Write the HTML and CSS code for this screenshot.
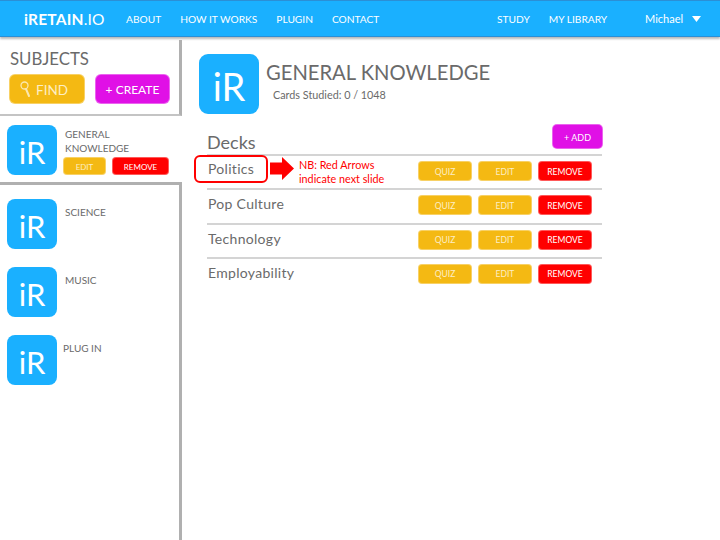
FILE: index.html
```html
<!DOCTYPE html>
<html lang="en">
<head>
<meta charset="utf-8">
<title>iRetain.io</title>
<link rel="stylesheet" href="styles.css">
</head>
<body>
<header class="topbar">
  <div class="logo"><b>iRETAIN</b>.IO</div>
  <nav class="nav nav-main"><a>ABOUT</a><a>HOW IT WORKS</a><a>PLUGIN</a><a>CONTACT</a></nav>
  <nav class="nav nav-user"><a>STUDY</a><a>MY LIBRARY</a></nav>
  <div class="user">Michael<svg class="caret" width="9" height="6" viewBox="0 0 9 6"><path d="M0 0h9L4.500 6z" fill="#fff"/></svg></div>
</header>
<div class="layout">
  <aside class="sidebar">
    <section class="subjects-head">
      <h2>SUBJECTS</h2>
      <div class="head-btns">
        <button class="btn amber find"><svg class="lens" width="11" height="17" viewBox="0 0 11 17"><circle cx="4.500" cy="4.500" r="3.500" fill="none" stroke="#fbe7ae" stroke-width="1.300"/><path d="M6 8l3 7" stroke="#fbe7ae" stroke-width="2" stroke-linecap="round"/></svg>FIND</button>
        <button class="btn magenta create">+ CREATE</button>
      </div>
    </section>
    <section class="active-subject">
      <div class="tile">iR</div>
      <div class="active-body">
        <div class="subject-name">GENERAL<br>KNOWLEDGE</div>
        <div class="mini-btns"><button class="btn amber mini-edit">EDIT</button><button class="btn red mini-remove">REMOVE</button></div>
      </div>
    </section>
    <section class="subject-list">
      <div class="subject"><div class="tile">iR</div><div class="subject-name">SCIENCE</div></div>
      <div class="subject"><div class="tile">iR</div><div class="subject-name">MUSIC</div></div>
      <div class="subject plug"><div class="tile">iR</div><div class="subject-name">PLUG IN</div></div>
    </section>
  </aside>
  <main class="content">
    <div class="title-row">
      <div class="tile tile-lg">iR</div>
      <div class="title-text">
        <h1>GENERAL KNOWLEDGE</h1>
        <p>Cards Studied: 0 / 1048</p>
      </div>
    </div>
    <div class="decks-head">
      <h2>Decks</h2>
      <button class="btn magenta add">+ ADD</button>
    </div>
    <div class="deck first">
      <span class="deck-name">Politics</span>
      <span class="outline"></span>
      <svg class="arrow" width="24" height="23" viewBox="0 0 24 23"><path d="M0 5.500h12V0l12 11.500L12 23v-5.500H0z" fill="#f00"/></svg>
      <span class="note">NB: Red Arrows<br>indicate next slide</span>
      <div class="actions"><button class="btn amber">QUIZ</button><button class="btn amber">EDIT</button><button class="btn red">REMOVE</button></div>
    </div>
    <div class="deck">
      <span class="deck-name">Pop Culture</span>
      <div class="actions"><button class="btn amber">QUIZ</button><button class="btn amber">EDIT</button><button class="btn red">REMOVE</button></div>
    </div>
    <div class="deck">
      <span class="deck-name">Technology</span>
      <div class="actions"><button class="btn amber">QUIZ</button><button class="btn amber">EDIT</button><button class="btn red">REMOVE</button></div>
    </div>
    <div class="deck">
      <span class="deck-name">Employability</span>
      <div class="actions"><button class="btn amber">QUIZ</button><button class="btn amber">EDIT</button><button class="btn red">REMOVE</button></div>
    </div>
  </main>
</div>
</body>
</html>
```
FILE: styles.css
```css
* { box-sizing: border-box; }
html, body { margin: 0; height: 100%; }
body {
  width: 720px;
  height: 540px;
  overflow: hidden;
  background: #fff;
  color: #6a6a6a;
  font-family: Lato, "Open Sans", sans-serif;
}
h1, h2, p { margin: 0; font-weight: 400; }

.topbar {
  height: 37px;
  background: #1ab0ff;
  border-top: 1px solid #2b8fd6;
  border-bottom: 1px solid #2b8fd6;
  box-shadow: 0 2px 2px #bbb;
  color: #fff;
  display: flex;
  align-items: center;
  padding-left: 24px;
  position: relative;
}
.logo { width: 102px; font-size: 15.500px; letter-spacing: 0.2px; }
.logo b { font-weight: 700; }
.nav { display: flex; font-size: 10.200px; }
.nav-main { gap: 19px; width: 371px; }
.nav-user { gap: 19px; width: 148px; }
.user { font-size: 11px; display: flex; align-items: center; gap: 9px; }

.layout { display: flex; height: 503px; }
.sidebar {
  width: 182px;
  flex: none;
  display: flex;
  flex-direction: column;
}
.subjects-head {
  height: 76px;
  margin-top: 3px;
  padding: 8px 0 0 10px;
  border-right: 3px solid #b0b0b0;
  border-bottom: 2px solid #c4c4c4;
}
.subjects-head h2 { font-size: 16.800px; line-height: 21px; }
.head-btns { display: flex; gap: 10px; margin-top: 5px; margin-left: -1px; }
.btn {
  border: 1px solid rgba(255,255,255,0.35);
  border-radius: 4px;
  color: #fff;
  font-family: inherit;
  font-size: 8.500px;
  padding: 1px 0 0;
  height: 20px;
  width: 54px;
  display: flex;
  align-items: center;
  justify-content: center;
}
.amber { background: #f4b913; color: #fdeec4; }
.red { background: #ff0000; }
.magenta { background: #e010e6; }
.find, .create { height: 30px; border-radius: 6px; }
.create { width: 75px; font-size: 12px; }
.find { width: 76px; font-size: 13.500px; gap: 5px; justify-content: flex-start; padding-left: 10px; }

.tile {
  width: 50px;
  height: 50px;
  flex: none;
  background: #1ab0ff;
  border-radius: 8px;
  color: #fff;
  font-size: 31px;
  display: flex;
  align-items: center;
  justify-content: center;
  padding-top: 4px;
}
.active-subject {
  height: 66px;
  display: flex;
  padding: 9px 0 0 7px;
}
.active-body { margin-left: 6px; }
.subject-name { font-size: 10px; line-height: 14px; margin-left: 2px; padding-top: 2px; }
.mini-btns { display: flex; gap: 6px; margin-top: 2px; }
.mini-edit { width: 43px; height: 18px; font-size: 8px; }
.mini-remove { width: 57px; height: 18px; font-size: 8px; }

.subject-list {
  flex: 1;
  border-top: 3px solid #b0b0b0;
  border-right: 3px solid #b0b0b0;
  padding: 14px 0 0 7px;
  display: flex;
  flex-direction: column;
  gap: 18px;
}
.subject { display: flex; gap: 6px; }
.subject .subject-name { margin-top: 4px; }
.plug { gap: 4px; }

.content { flex: 1; padding: 17px 117px 0 17px; }
.title-row { display: flex; height: 70px; }
.tile-lg { width: 60px; height: 60px; border-radius: 9px; font-size: 38px; }
.title-text { margin-left: 7px; }
.title-text h1 { font-size: 20.200px; line-height: 26px; margin-top: 5px; }
.title-text p { font-size: 10.800px; line-height: 14px; margin: 3px 0 0 7px; }
.decks-head {
  display: flex;
  justify-content: space-between;
  margin-left: 8px;
  height: 30px;
}
.decks-head h2 { font-size: 18px; line-height: 22px; margin-top: 7px; }
.add { width: 51px; height: 25px; border-radius: 5px; font-size: 9px; }
.deck {
  position: relative;
  margin: 0 1px 0 8px;
  height: 34.330px;
  border-top: 2px solid #d4d4d4;
  display: flex;
  align-items: flex-start;
  padding: 3px 10px 0 1px;
}
.deck-name { font-size: 14px; line-height: 20px; letter-spacing: 0.3px; }
.deck + .deck .deck-name { margin-top: 1px; }
.actions { margin-left: auto; display: flex; gap: 6px; margin-top: 2px; }
.outline {
  position: absolute;
  left: -13px;
  top: -1px;
  width: 74px;
  height: 28px;
  border: 2px solid #f00;
  border-radius: 6px;
}
.arrow { position: absolute; left: 63px; top: 1px; }
.note { position: absolute; left: 92px; top: 2px; font-size: 10.800px; line-height: 14px; color: #f00; }
```
